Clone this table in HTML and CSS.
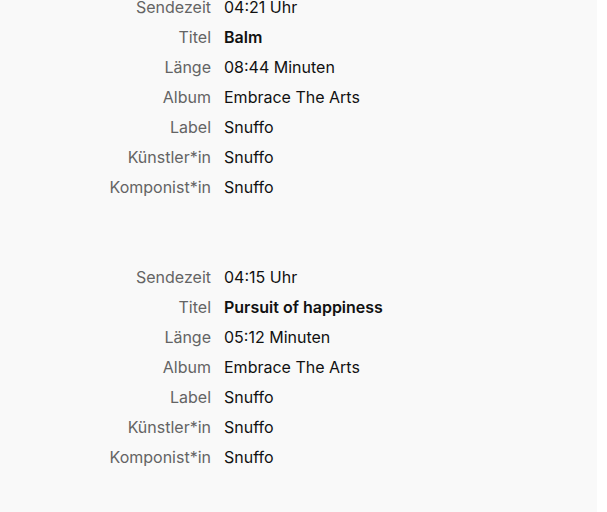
FILE: index.html
```html
<!DOCTYPE html>
<html lang="de">
<head>
<meta charset="utf-8">
<link rel="stylesheet" href="styles.css">
</head>
<body>
<div class="panel">
  <dl class="track">
    <dt>Sendezeit</dt><dd>04:21 Uhr</dd>
    <dt>Titel</dt><dd class="title">Balm</dd>
    <dt>Länge</dt><dd>08:44 Minuten</dd>
    <dt>Album</dt><dd>Embrace The Arts</dd>
    <dt>Label</dt><dd>Snuffo</dd>
    <dt>Künstler*in</dt><dd>Snuffo</dd>
    <dt>Komponist*in</dt><dd>Snuffo</dd>
  </dl>
  <dl class="track">
    <dt>Sendezeit</dt><dd>04:15 Uhr</dd>
    <dt>Titel</dt><dd class="title">Pursuit of happiness</dd>
    <dt>Länge</dt><dd>05:12 Minuten</dd>
    <dt>Album</dt><dd>Embrace The Arts</dd>
    <dt>Label</dt><dd>Snuffo</dd>
    <dt>Künstler*in</dt><dd>Snuffo</dd>
    <dt>Komponist*in</dt><dd>Snuffo</dd>
  </dl>
</div>
</body>
</html>
```
FILE: styles.css
```css
html, body {
  margin: 0;
  padding: 0;
  background: #ffffff;
  height: 100%;
  overflow: hidden;
}
.panel {
  width: 597px;
  height: calc(100% + 8px);
  background: #f9f9f9;
  font-family: Inter, "Noto Sans", sans-serif;
  font-size: 16px;
  display: flex;
  flex-direction: column;
  gap: 60px;
  margin-top: -8px;
}
.track {
  margin: 0;
  display: grid;
  grid-template-columns: 211px auto;
  column-gap: 13px;
  line-height: 30px;
}
.track dt {
  text-align: right;
  color: #646464;
}
.track dd {
  margin: 0;
  color: #111111;
}
.track dd.title {
  font-weight: 600;
}
```
